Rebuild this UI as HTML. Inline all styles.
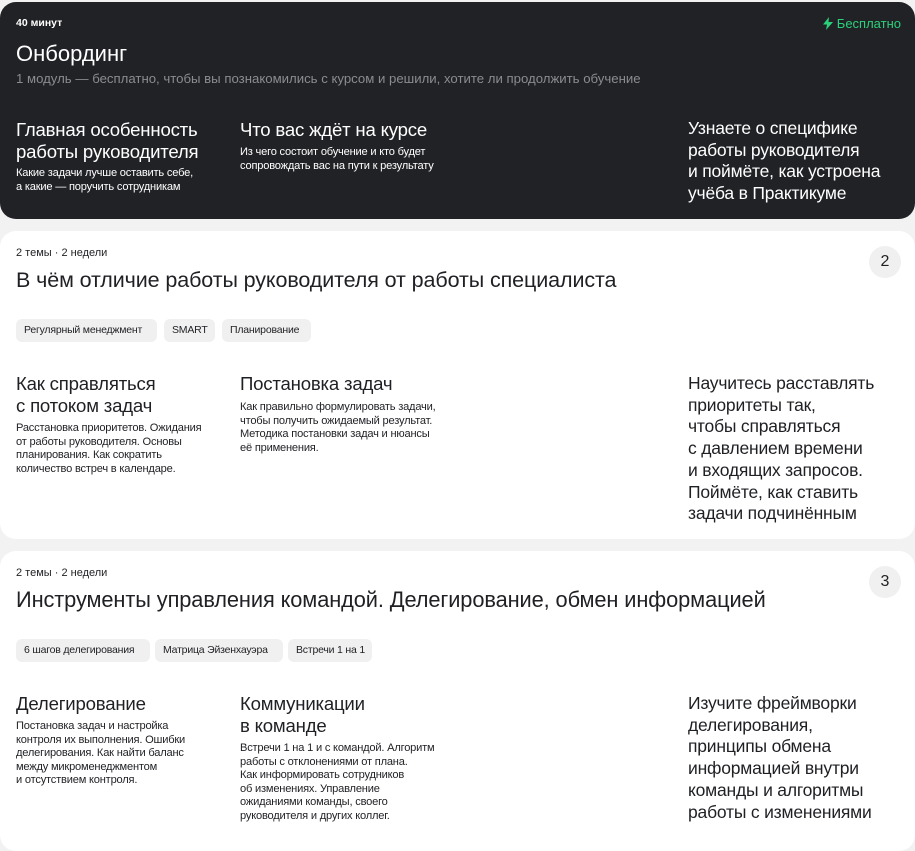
<!DOCTYPE html>
<html><head><meta charset="utf-8"><style>
*{margin:0;padding:0;box-sizing:border-box}
body{width:915px;height:838px;background:#f2f2f2;font-family:"Liberation Sans",sans-serif;position:relative;overflow:hidden;color:#1f2024}
.card{position:absolute;left:0;width:915px;border-radius:16px;background:#fff}
.dark{background:#212226;color:#fff}
.a{position:absolute;white-space:nowrap}
.meta{font-size:11px;line-height:14px}
.h{font-size:18.6px;line-height:21.5px;letter-spacing:-0.2px}
.d{font-size:11.1px;line-height:13.5px;letter-spacing:-0.2px}
.r{font-size:17.5px;line-height:21.7px;letter-spacing:-0.2px}
.tag{position:absolute;height:23px;background:#f0f0f0;border-radius:6px;font-size:10.5px;line-height:23px;padding:0 8px;letter-spacing:-0.2px;white-space:nowrap}
.badge{position:absolute;left:869px;width:32px;height:32px;border-radius:50%;background:#f0f0f0;text-align:center;line-height:32px;font-size:16px}
.title{font-size:21.5px;line-height:24px;letter-spacing:-0.1px}
</style></head><body>
<div class="card dark" style="top:2px;height:217px">
  <div class="a meta" style="left:16px;top:14px;font-weight:bold;font-size:10.5px">40 минут</div>
  <div class="a" style="right:14px;top:14px;font-size:13px;color:#2bd17a"><svg width="10" height="13" viewBox="0 0 10 13" style="vertical-align:-2px;margin-right:4px"><path d="M6 0L0 7.5h4L3 13l7-8H5.5z" fill="#2bd17a"/></svg>Бесплатно</div>
  <div class="a" style="left:16px;top:39px;font-size:22px;line-height:26px">Онбординг</div>
  <div class="a" style="left:16px;top:68px;font-size:13.2px;line-height:17px;color:#8b8c90">1 модуль — бесплатно, чтобы вы познакомились с курсом и решили, хотите ли продолжить обучение</div>
  <div class="a h" style="left:16px;top:117px">Главная особенность<br>работы руководителя</div>
  <div class="a d" style="left:16px;top:165px">Какие задачи лучше оставить себе,<br>а какие — поручить сотрудникам</div>
  <div class="a h" style="left:240px;top:117px">Что вас ждёт на курсе</div>
  <div class="a d" style="left:240px;top:144px">Из чего состоит обучение и кто будет<br>сопровождать вас на пути к результату</div>
  <div class="a r" style="left:688px;top:116px">Узнаете о специфике<br>работы руководителя<br>и поймёте, как устроена<br>учёба в Практикуме</div>
</div>

<div class="card" style="top:231px;height:308px">
  <div class="a meta" style="left:16px;top:15px">2 темы · 2 недели</div>
  <div class="badge" style="top:15px">2</div>
  <div class="a title" style="left:16px;top:37px">В чём отличие работы руководителя от работы специалиста</div>
  <div class="tag" style="left:16px;top:88px;width:141px">Регулярный менеджмент</div>
  <div class="tag" style="left:164px;top:88px;width:51px">SMART</div>
  <div class="tag" style="left:222px;top:88px;width:89px">Планирование</div>
  <div class="a h" style="left:16px;top:142px">Как справляться<br>с потоком задач</div>
  <div class="a d" style="left:16px;top:191px">Расстановка приоритетов. Ожидания<br>от работы руководителя. Основы<br>планирования. Как сократить<br>количество встреч в календаре.</div>
  <div class="a h" style="left:240px;top:142px">Постановка задач</div>
  <div class="a d" style="left:240px;top:170px">Как правильно формулировать задачи,<br>чтобы получить ожидаемый результат.<br>Методика постановки задач и нюансы<br>её применения.</div>
  <div class="a r" style="left:688px;top:142px">Научитесь расставлять<br>приоритеты так,<br>чтобы справляться<br>с давлением времени<br>и входящих запросов.<br>Поймёте, как ставить<br>задачи подчинённым</div>
</div>

<div class="card" style="top:551px;height:300px">
  <div class="a meta" style="left:16px;top:15px">2 темы · 2 недели</div>
  <div class="badge" style="top:15px">3</div>
  <div class="a title" style="left:16px;top:37px;font-size:21.8px">Инструменты управления командой. Делегирование, обмен информацией</div>
  <div class="tag" style="left:16px;top:88px;width:134px">6 шагов делегирования</div>
  <div class="tag" style="left:155px;top:88px;width:128px">Матрица Эйзенхауэра</div>
  <div class="tag" style="left:288px;top:88px;width:84px">Встречи 1 на 1</div>
  <div class="a h" style="left:16px;top:142px">Делегирование</div>
  <div class="a d" style="left:16px;top:169px">Постановка задач и настройка<br>контроля их выполнения. Ошибки<br>делегирования. Как найти баланс<br>между микроменеджментом<br>и отсутствием контроля.</div>
  <div class="a h" style="left:240px;top:142px">Коммуникации<br>в команде</div>
  <div class="a d" style="left:240px;top:191px">Встречи 1 на 1 и с командой. Алгоритм<br>работы с отклонениями от плана.<br>Как информировать сотрудников<br>об изменениях. Управление<br>ожиданиями команды, своего<br>руководителя и других коллег.</div>
  <div class="a r" style="left:688px;top:142px">Изучите фреймворки<br>делегирования,<br>принципы обмена<br>информацией внутри<br>команды и алгоритмы<br>работы с изменениями</div>
</div>
</body></html>
